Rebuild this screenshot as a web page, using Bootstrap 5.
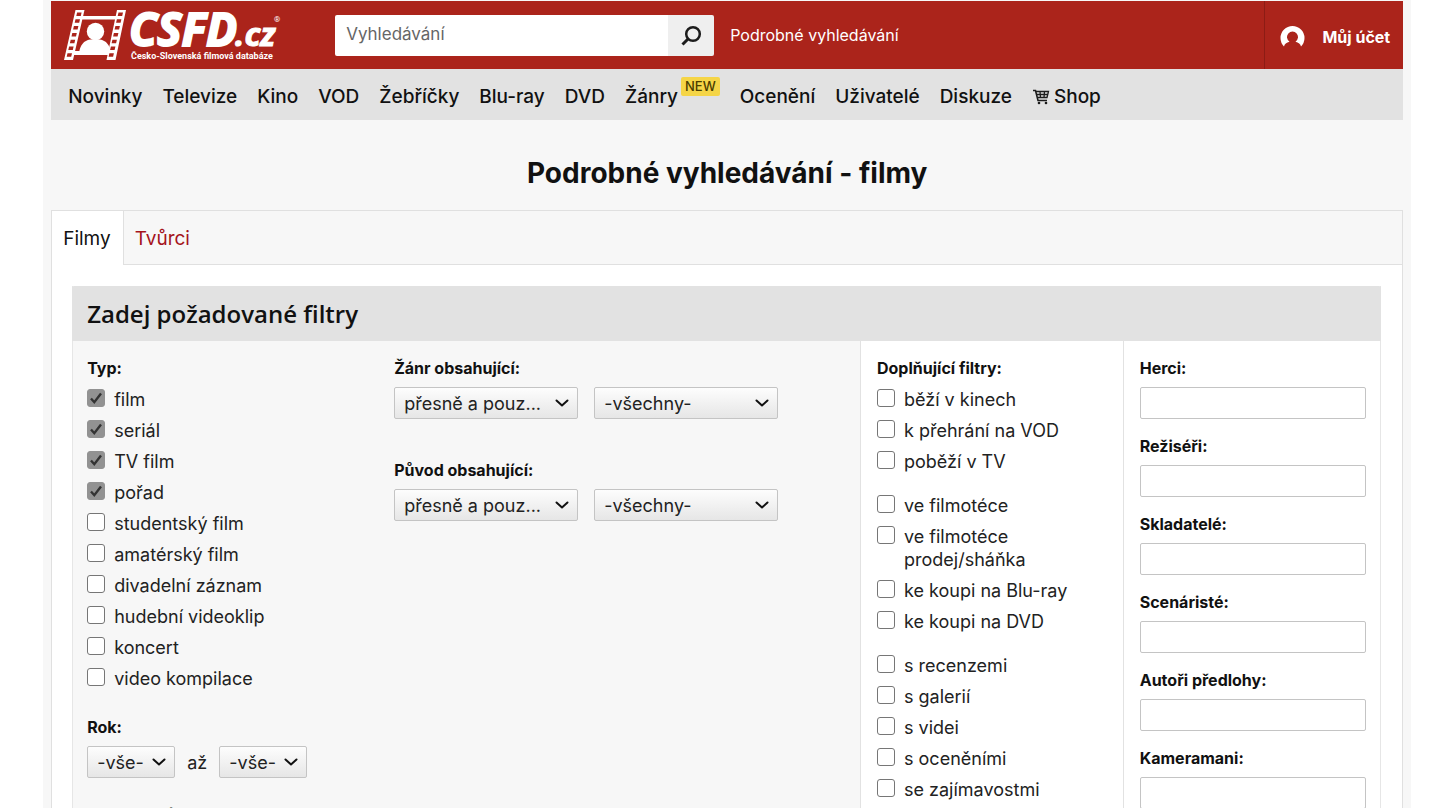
<!DOCTYPE html>
<html lang="cs">
<head>
<meta charset="utf-8">
<meta name="viewport" content="width=device-width, initial-scale=1">
<title>Podrobné vyhledávání - filmy | ČSFD.cz</title>
<link href="https://cdn.jsdelivr.net/npm/bootstrap@5.3.0/dist/css/bootstrap.min.css" rel="stylesheet">
<style>
  body { font-family: Inter, "Open Sans", sans-serif; font-size: 18px; line-height: 23px; color: #222; background: #fff; }
  a { text-decoration: none; }
  .site { margin: 0 2% 0 3%; background: #f7f7f7; padding: 1px 8px 0; min-height: 100vh; }
  .topbar { background: #ab241b; height: 68px; }
  .brand { width: 284px; padding-left: 13px; }
  .search { width: 379px; height: 41px; }
  .search .form-control { font-size: 17px; border: 0; border-radius: 2px; padding: 0 11px; box-shadow: none; color: #222; }
  .search .form-control::placeholder { color: #666; }
  .search .btn { width: 46px; background: #efefef; border: 0; border-radius: 0 2px 2px 0; padding: 0; }
  .toplink { font-size: 16px; color: #fff; }
  .account { border-left: 1px solid #8c1c15; padding: 4px 13px 0 15px; gap: 17px; color: #fff; font-size: 16px; font-weight: 700; }
  .mainnav { background: #e2e2e2; height: 51px; padding: 4px 17px 0; gap: 20px; font-size: 19px; }
  .mainnav a { color: #111; font-weight: 500; }
  .tag-new { font-size: 13px; line-height: 19px; font-weight: 500; background: #f5d547; color: #4a3c00; padding: 0 4px; border-radius: 2px; margin: -20px 0 0 3px; }
  .page-title { font-size: 28px; line-height: 36px; font-weight: 700; color: #111; margin: 35px 0 19px; }
  .box { border: 1px solid #e0e0e0; background: #fff; }
  .tabs { background: #f7f7f7; height: 54px; font-size: 19px; }
  .tabs a { padding: 16px 12px 0 11px; border-bottom: 1px solid #e0e0e0; color: #a5141c; }
  .tabs a.current { background: #fff; color: #111; border-bottom: 0; border-right: 1px solid #e0e0e0; }
  .tabs .rest { border-bottom: 1px solid #e0e0e0; }
  .filters { margin: 21px 21px 0 20px; border: 1px solid #e6e6e6; border-top: 0; }
  .filters h2 { font-family: "Open Sans", sans-serif; font-size: 24px; line-height: 55px; font-weight: 600; background: #e2e2e2; color: #111; padding-left: 15px; margin: 0 -1px; border-radius: 2px 2px 0 0; }
  .cols > div { padding-top: 16px; padding-bottom: 40px; }
  .main-col { width: 60.2%; padding-left: 14px; background: #f7f7f7; }
  .side-col { border-left: 1px solid #e2e2e2; padding-left: 16px; padding-right: 14px; }
  .extra-col { width: 20.1%; }
  .people-col { width: 19.7%; }
  .type-col { width: 307px; }
  .cap { display: block; font-size: 16px; font-weight: 700; color: #111; line-height: 23px; margin-bottom: 7px; }
  .ticks { padding-top: 1px; margin-bottom: 20px; }
  .ticks-type { margin-bottom: 26px; }
  .tick { display: flex; margin-bottom: 8px; }
  .tick .form-check-input { flex: none; width: 18px; height: 18px; margin: 1px 9px 0 0; border: 1px solid #767676; border-radius: 3px; background-color: #fff; }
  .tick .form-check-input:checked { background-color: #929292; border-color: #929292; background-size: 16px; background-image: url("data:image/svg+xml,%3csvg xmlns='http://www.w3.org/2000/svg' viewBox='0 0 16 16'%3e%3cpath fill='none' stroke='%23333' stroke-width='2.4' d='M3 8.5l3.3 3.7L13 3.6'/%3e%3c/svg%3e"); }
  .pick { height: 32px; padding: 0 28px 0 9px; font-size: 18px; line-height: 23px; color: #222; border: 1px solid #c4c4c4; border-radius: 2px; background: url("data:image/svg+xml,%3csvg xmlns='http://www.w3.org/2000/svg' viewBox='0 0 16 16'%3e%3cpath fill='none' stroke='%23111' stroke-width='2' stroke-linecap='round' stroke-linejoin='round' d='M2.5 5.5L8 10.5l5.5-5'/%3e%3c/svg%3e") right 7px center / 16px no-repeat, linear-gradient(#fdfdfd, #e6e6e6); }
  .pick-wide { width: 184px; }
  .pick-year { width: 88px; }
  .pick-row { margin-bottom: 40px; }
  .year-row { margin-bottom: 25px; }
  .person { margin-bottom: 16px; }
  .person .form-control { height: 32px; padding: 0 8px; border: 1px solid #c4c4c4; border-radius: 2px; }
</style>
</head>
<body>
<div class="site">
  <header>
    <div class="topbar d-flex">
      <a class="brand d-flex align-items-center" href="#" aria-label="ČSFD.cz">
        <svg width="220" height="56" viewBox="64 7 220 56">
          <g fill="#fff">
            <path d="M75.500 10h9L73 60h-9ZM117 10h9L115.500 60h-9ZM82 16h36l-.8 3.500h-36ZM73 51h37l-.8 4H72Z"/>
            <circle cx="95.500" cy="31.500" r="8.700"/>
            <path d="M79 53c1-8 5-12.500 11-13.500h10c6 1 10 5.500 11 13.500Z"/>
          </g>
          <g fill="#ab241b">
            <path d="M77.800 12.500h4.500l-.8 3.500h-4.500zM76.200 19.300h4.500l-.8 3.500h-4.500zM74.600 26.100h4.500l-.8 3.500h-4.500zM73 32.900h4.500l-.8 3.500h-4.500zM71.400 39.700h4.500l-.8 3.500h-4.500zM69.800 46.500h4.500l-.8 3.500h-4.500zM68.200 53.300h4.500l-.8 3.500h-4.500z" transform="translate(-.7 0)"/>
            <path d="M119 12.500h4.500l-.8 3.500h-4.500zM117.400 19.300h4.500l-.8 3.500h-4.500zM115.900 26.100h4.500l-.8 3.500h-4.500zM114.400 32.900h4.500l-.8 3.500h-4.500zM112.900 39.700h4.500l-.8 3.500h-4.500zM111.400 46.500h4.500l-.8 3.500h-4.500zM109.900 53.300h4.500l-.8 3.500h-4.500z" transform="translate(-.5 0)"/>
          </g>
          <g fill="#fff" stroke="#fff" font-family="'Open Sans',sans-serif" font-style="italic">
            <text x="129" y="46" font-size="46" font-weight="700" stroke-width="2">CSFD</text>
            <text x="235" y="46" font-size="33" font-weight="700" stroke-width="1">.cz</text>
          </g>
          <text x="131" y="59" font-size="9" font-weight="700" fill="#fff" font-family="Roboto,sans-serif">Česko-Slovenská filmová databáze</text>
          <text x="274" y="22" font-size="8" fill="#fff" font-family="Roboto,sans-serif">®</text>
        </svg>
      </a>
      <form class="search input-group align-self-center" role="search">
        <input type="search" class="form-control" placeholder="Vyhledávání" aria-label="Vyhledávání">
        <button type="button" class="btn" aria-label="Hledat">
          <svg width="22" height="22" viewBox="0 0 22 22" fill="none" stroke="#1c1c1c"><circle cx="13" cy="9" r="6.800" stroke-width="2.500"/><path d="M8 14l-5.500 5.500" stroke-width="3"/></svg>
        </button>
      </form>
      <a class="toplink align-self-center ms-3" href="#">Podrobné vyhledávání</a>
      <a class="account d-flex align-items-center ms-auto" href="#">
        <svg width="25" height="22" viewBox="0 0 25 22"><path fill="#fff" fill-rule="evenodd" d="M4 20.500A12 12 0 1 1 21 20.500C20.500 18 18.500 16.500 15.500 15.700a5.500 5.500 0 1 0-6 0C6.500 16.500 4.500 18 4 20.500Z"/></svg>
        <span>Můj účet</span>
      </a>
    </div>
    <nav class="mainnav d-flex align-items-center">
      <a href="#">Novinky</a><a href="#">Televize</a><a href="#">Kino</a><a href="#">VOD</a><a href="#">Žebříčky</a><a href="#">Blu-ray</a><a href="#">DVD</a>
      <a class="d-flex align-items-center" href="#">Žánry<span class="tag-new">NEW</span></a>
      <a href="#">Ocenění</a><a href="#">Uživatelé</a><a href="#">Diskuze</a>
      <a class="d-flex align-items-center gap-1" href="#">
        <svg width="18" height="16" viewBox="0 0 18 16" fill="none" stroke="#1c1c1c"><path stroke-width="1.600" d="M1 1.500h2.500L6 11.500h9"/><path stroke-width="1.300" d="M4 2.500h12.500L15 8.500H5.500M4.500 5.500h11.500M8 2.500l.5 6M12.500 2.500L12 8.500"/><circle cx="7" cy="14" r="1.300" fill="#1c1c1c" stroke="none"/><circle cx="14" cy="14" r="1.300" fill="#1c1c1c" stroke="none"/></svg>Shop</a>
    </nav>
  </header>
  <main>
    <h1 class="page-title text-center">Podrobné vyhledávání - filmy</h1>
    <div class="box">
      <nav class="tabs d-flex"><a class="current" href="#">Filmy</a><a href="#">Tvůrci</a><span class="rest flex-grow-1"></span></nav>
      <form class="filters">
        <h2>Zadej požadované filtry</h2>
        <div class="cols d-flex">
          <div class="main-col d-flex">
            <div class="type-col">
              <span class="cap">Typ:</span>
              <div class="ticks ticks-type">
                <label class="tick"><input class="form-check-input" type="checkbox" checked>film</label>
                <label class="tick"><input class="form-check-input" type="checkbox" checked>seriál</label>
                <label class="tick"><input class="form-check-input" type="checkbox" checked>TV film</label>
                <label class="tick"><input class="form-check-input" type="checkbox" checked>pořad</label>
                <label class="tick"><input class="form-check-input" type="checkbox">studentský film</label>
                <label class="tick"><input class="form-check-input" type="checkbox">amatérský film</label>
                <label class="tick"><input class="form-check-input" type="checkbox">divadelní záznam</label>
                <label class="tick"><input class="form-check-input" type="checkbox">hudební videoklip</label>
                <label class="tick"><input class="form-check-input" type="checkbox">koncert</label>
                <label class="tick"><input class="form-check-input" type="checkbox">video kompilace</label>
              </div>
              <label class="cap" for="y1">Rok:</label>
              <div class="year-row d-flex align-items-center">
                <select id="y1" class="form-select pick pick-year"><option>-vše-</option></select>
                <label class="px-2 mx-1" for="y2">až</label>
                <select id="y2" class="form-select pick pick-year"><option>-vše-</option></select>
              </div>
              <span class="cap">Hodnocení:</span>
            </div>
            <div>
              <label class="cap" for="g1">Žánr obsahující:</label>
              <div class="pick-row d-flex gap-3">
                <select id="g1" class="form-select pick pick-wide"><option>přesně a pouz...</option></select>
                <select class="form-select pick pick-wide" aria-label="Žánr"><option>-všechny-</option></select>
              </div>
              <label class="cap" for="o1">Původ obsahující:</label>
              <div class="pick-row d-flex gap-3">
                <select id="o1" class="form-select pick pick-wide"><option>přesně a pouz...</option></select>
                <select class="form-select pick pick-wide" aria-label="Původ"><option>-všechny-</option></select>
              </div>
            </div>
          </div>
          <div class="side-col extra-col">
            <span class="cap">Doplňující filtry:</span>
            <div class="ticks">
              <label class="tick"><input class="form-check-input" type="checkbox">běží v kinech</label>
              <label class="tick"><input class="form-check-input" type="checkbox">k přehrání na VOD</label>
              <label class="tick"><input class="form-check-input" type="checkbox">poběží v TV</label>
            </div>
            <div class="ticks">
              <label class="tick"><input class="form-check-input" type="checkbox">ve filmotéce</label>
              <label class="tick"><input class="form-check-input" type="checkbox"><span>ve filmotéce<br>prodej/sháňka</span></label>
              <label class="tick"><input class="form-check-input" type="checkbox">ke koupi na Blu-ray</label>
              <label class="tick"><input class="form-check-input" type="checkbox">ke koupi na DVD</label>
            </div>
            <div class="ticks">
              <label class="tick"><input class="form-check-input" type="checkbox">s recenzemi</label>
              <label class="tick"><input class="form-check-input" type="checkbox">s galerií</label>
              <label class="tick"><input class="form-check-input" type="checkbox">s videi</label>
              <label class="tick"><input class="form-check-input" type="checkbox">s oceněními</label>
              <label class="tick"><input class="form-check-input" type="checkbox">se zajímavostmi</label>
            </div>
          </div>
          <div class="side-col people-col">
            <div class="person"><label class="cap" for="p1">Herci:</label><input id="p1" type="text" class="form-control"></div>
            <div class="person"><label class="cap" for="p2">Režiséři:</label><input id="p2" type="text" class="form-control"></div>
            <div class="person"><label class="cap" for="p3">Skladatelé:</label><input id="p3" type="text" class="form-control"></div>
            <div class="person"><label class="cap" for="p4">Scenáristé:</label><input id="p4" type="text" class="form-control"></div>
            <div class="person"><label class="cap" for="p5">Autoři předlohy:</label><input id="p5" type="text" class="form-control"></div>
            <div class="person"><label class="cap" for="p6">Kameramani:</label><input id="p6" type="text" class="form-control"></div>
          </div>
        </div>
      </form>
    </div>
  </main>
</div>
<script src="https://cdn.jsdelivr.net/npm/bootstrap@5.3.0/dist/js/bootstrap.bundle.min.js"></script>
</body>
</html>
